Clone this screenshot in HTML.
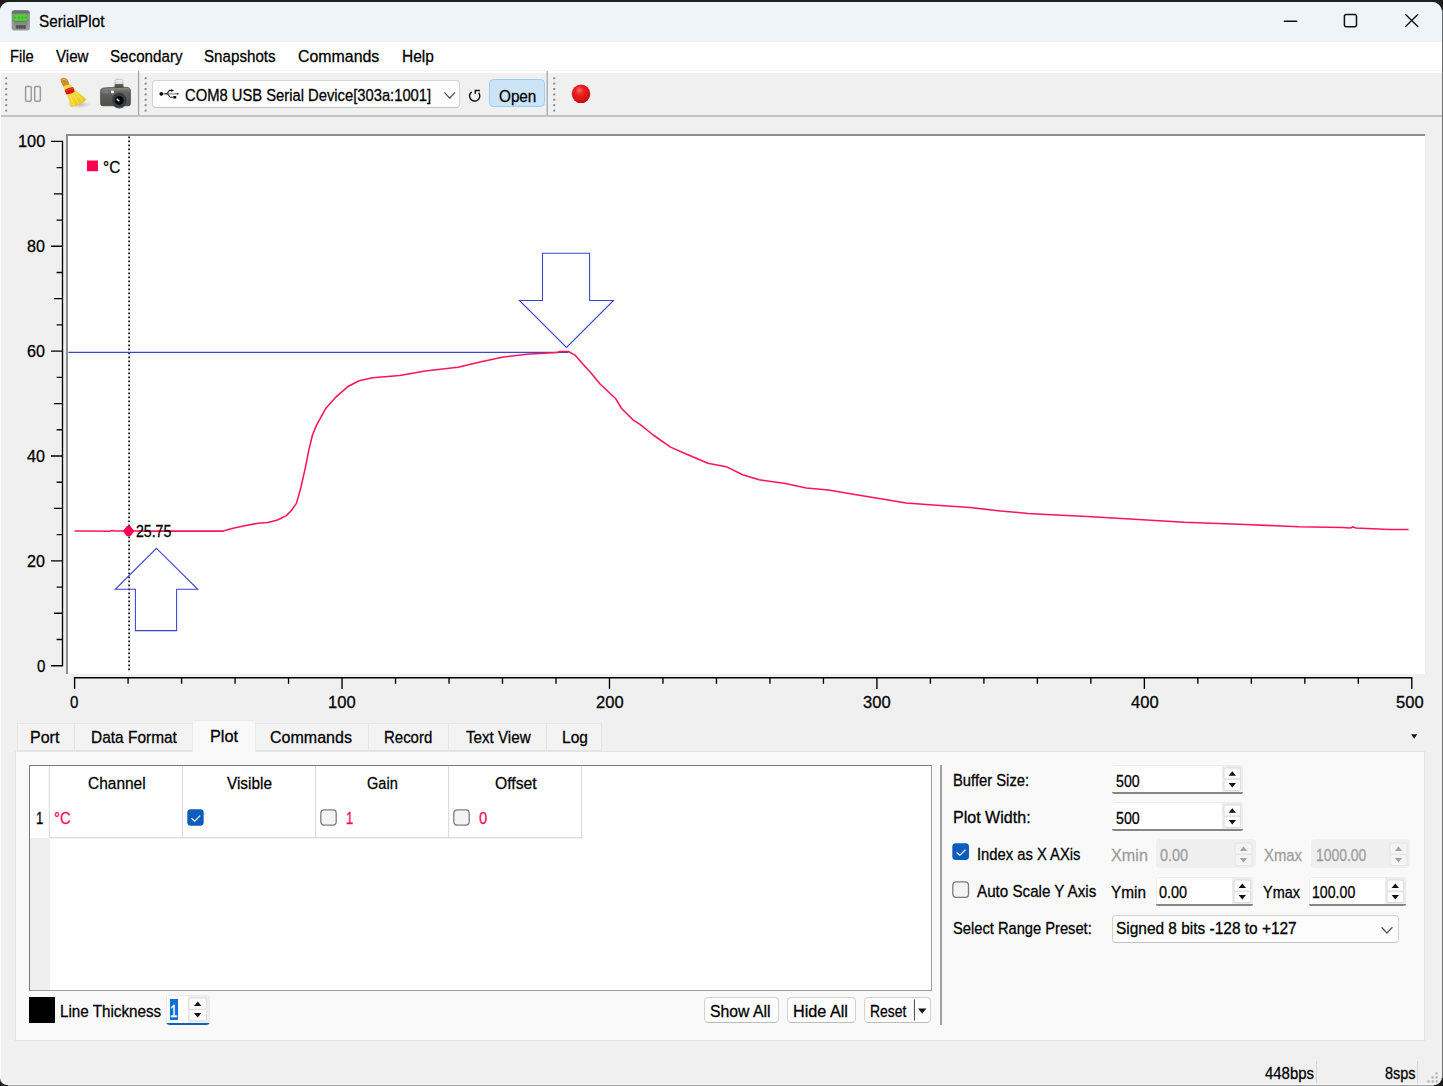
<!DOCTYPE html>
<html><head><meta charset="utf-8"><title>SerialPlot</title>
<style>
html,body{margin:0;padding:0;}
body{width:1443px;height:1086px;overflow:hidden;background:#1e1e1e;font-family:"Liberation Sans",sans-serif;}
#win{position:absolute;left:0;top:2px;width:1441.6px;height:1083.2px;background:#f0f0f0;border-radius:9px 10px 8px 7px;overflow:hidden;}
#in{position:absolute;left:0;top:-2px;width:1443px;height:1086px;}
.a{position:absolute;display:block;}
.t{position:absolute;white-space:nowrap;transform-origin:0 0;line-height:normal;-webkit-text-stroke:0.28px;font-family:"Liberation Sans",sans-serif;}
#edgeR{position:absolute;left:1441.6px;top:10px;width:1.4px;height:1068px;background:#6b6b6b;}
#edgeB{position:absolute;left:8px;top:1085.2px;width:1426px;height:0.8px;background:#9c9c9c;}
#edgeL{position:absolute;left:0;top:44px;width:1px;height:1034px;background:#fbfbfb;}
#edgeBW{position:absolute;left:6px;top:1084.2px;width:1430px;height:1px;background:#fbfbfb;}
</style></head>
<body>
<div id="win"><div id="in">
<!-- title bar -->
<div class="a" style="left:0.00px;top:0.00px;width:1443.00px;height:42.00px;background:#eff4f8;"></div>
<svg class="a" style="left:10px;top:8px" width="22" height="24" viewBox="10 8 22 24">
<defs><linearGradient id="gi" x1="0" y1="0" x2="0" y2="1"><stop offset="0" stop-color="#7a787c"/><stop offset="0.2" stop-color="#8f8e90"/><stop offset="1" stop-color="#9b9b9b"/></linearGradient></defs>
<rect x="11.6" y="10.3" width="18.3" height="20.2" rx="2.8" fill="url(#gi)"/>
<path d="M12.2 13.6 V12.6 Q12.2 10.6 14.4 10.6 H27.1 Q29.3 10.6 29.3 12.6 V13.6 Z" fill="#716d72"/>
<rect x="13.3" y="14.1" width="14.6" height="7.6" rx="2" fill="#3f8a33"/>
<rect x="13.3" y="14.1" width="14.6" height="7" rx="2" fill="#55c93e"/>
<g fill="#3faa2c"><circle cx="15.2" cy="17.6" r="0.9"/><circle cx="18.7" cy="17.6" r="0.9"/><circle cx="22.3" cy="17.6" r="0.9"/><circle cx="25.9" cy="17.6" r="0.9"/></g>
<rect x="14" y="22.2" width="13.4" height="2.4" fill="#858a83"/>
<rect x="15.7" y="25" width="10.2" height="3.7" fill="#606060"/>
<g fill="#4c4c4c"><rect x="16.6" y="25.6" width="1.2" height="2.6"/><rect x="19" y="25.6" width="1.2" height="2.6"/><rect x="21.4" y="25.6" width="1.2" height="2.6"/><rect x="23.8" y="25.6" width="1.2" height="2.6"/></g>
</svg>
<span class="t" id="t0" style="left:39.40px;top:12.00px;font-size:17px;color:#000;transform:scaleX(0.8988);">SerialPlot</span>
<svg class="a" style="left:1270px;top:6px" width="160" height="30" viewBox="1270 6 160 30" fill="none" stroke="#111" stroke-width="1.5" stroke-linecap="round">
<path d="M1284.4 21.3 H1296.8"/>
<rect x="1344.4" y="14.4" width="12.1" height="12.3" rx="2"/>
<path d="M1405.6 14.6 L1417.8 26.6 M1417.8 14.6 L1405.6 26.6" stroke-width="1.35"/>
</svg>
<!-- menu bar -->
<div class="a" style="left:0.00px;top:42.00px;width:1443.00px;height:31.00px;background:#fff;"></div>
<div class="a" style="left:0.00px;top:70.20px;width:1443.00px;height:1.00px;background:#f5f5f5;"></div>
<span class="t" id="t1" style="left:10.30px;top:47.00px;font-size:16.8px;color:#000;transform:scaleX(0.8757);">File</span>
<span class="t" id="t2" style="left:55.70px;top:47.00px;font-size:16.8px;color:#000;transform:scaleX(0.8989);">View</span>
<span class="t" id="t3" style="left:110.00px;top:47.00px;font-size:16.8px;color:#000;transform:scaleX(0.9039);">Secondary</span>
<span class="t" id="t4" style="left:204.30px;top:47.00px;font-size:16.8px;color:#000;transform:scaleX(0.9031);">Snapshots</span>
<span class="t" id="t5" style="left:298.40px;top:47.00px;font-size:16.8px;color:#000;transform:scaleX(0.9476);">Commands</span>
<span class="t" id="t6" style="left:401.80px;top:47.00px;font-size:16.8px;color:#000;transform:scaleX(0.9260);">Help</span>
<!-- toolbar -->
<div class="a" style="left:0.00px;top:115.00px;width:1443.00px;height:1.80px;background:#c2c2c2;"></div>
<svg class="a" style="left:0;top:70px" width="700" height="48" viewBox="0 70 700 48"><rect x="5.2" y="77.2" width="2" height="2" fill="#8d8d8d"/><rect x="4.0" y="76.2" width="1.2" height="1.2" fill="#fff"/><rect x="5.2" y="82.6" width="2" height="2" fill="#8d8d8d"/><rect x="4.0" y="81.6" width="1.2" height="1.2" fill="#fff"/><rect x="5.2" y="88.0" width="2" height="2" fill="#8d8d8d"/><rect x="4.0" y="87.0" width="1.2" height="1.2" fill="#fff"/><rect x="5.2" y="93.4" width="2" height="2" fill="#8d8d8d"/><rect x="4.0" y="92.4" width="1.2" height="1.2" fill="#fff"/><rect x="5.2" y="98.8" width="2" height="2" fill="#8d8d8d"/><rect x="4.0" y="97.8" width="1.2" height="1.2" fill="#fff"/><rect x="5.2" y="104.2" width="2" height="2" fill="#8d8d8d"/><rect x="4.0" y="103.2" width="1.2" height="1.2" fill="#fff"/><rect x="5.2" y="109.6" width="2" height="2" fill="#8d8d8d"/><rect x="4.0" y="108.6" width="1.2" height="1.2" fill="#fff"/><rect x="144.6" y="77.2" width="2" height="2" fill="#8d8d8d"/><rect x="143.4" y="76.2" width="1.2" height="1.2" fill="#fff"/><rect x="144.6" y="82.6" width="2" height="2" fill="#8d8d8d"/><rect x="143.4" y="81.6" width="1.2" height="1.2" fill="#fff"/><rect x="144.6" y="88.0" width="2" height="2" fill="#8d8d8d"/><rect x="143.4" y="87.0" width="1.2" height="1.2" fill="#fff"/><rect x="144.6" y="93.4" width="2" height="2" fill="#8d8d8d"/><rect x="143.4" y="92.4" width="1.2" height="1.2" fill="#fff"/><rect x="144.6" y="98.8" width="2" height="2" fill="#8d8d8d"/><rect x="143.4" y="97.8" width="1.2" height="1.2" fill="#fff"/><rect x="144.6" y="104.2" width="2" height="2" fill="#8d8d8d"/><rect x="143.4" y="103.2" width="1.2" height="1.2" fill="#fff"/><rect x="144.6" y="109.6" width="2" height="2" fill="#8d8d8d"/><rect x="143.4" y="108.6" width="1.2" height="1.2" fill="#fff"/><rect x="553.2" y="77.2" width="2" height="2" fill="#8d8d8d"/><rect x="552.0" y="76.2" width="1.2" height="1.2" fill="#fff"/><rect x="553.2" y="82.6" width="2" height="2" fill="#8d8d8d"/><rect x="552.0" y="81.6" width="1.2" height="1.2" fill="#fff"/><rect x="553.2" y="88.0" width="2" height="2" fill="#8d8d8d"/><rect x="552.0" y="87.0" width="1.2" height="1.2" fill="#fff"/><rect x="553.2" y="93.4" width="2" height="2" fill="#8d8d8d"/><rect x="552.0" y="92.4" width="1.2" height="1.2" fill="#fff"/><rect x="553.2" y="98.8" width="2" height="2" fill="#8d8d8d"/><rect x="552.0" y="97.8" width="1.2" height="1.2" fill="#fff"/><rect x="553.2" y="104.2" width="2" height="2" fill="#8d8d8d"/><rect x="552.0" y="103.2" width="1.2" height="1.2" fill="#fff"/><rect x="553.2" y="109.6" width="2" height="2" fill="#8d8d8d"/><rect x="552.0" y="108.6" width="1.2" height="1.2" fill="#fff"/><rect x="138" y="71" width="1.2" height="44" fill="#a2a2a2"/><rect x="546.6" y="71" width="1.2" height="44" fill="#a2a2a2"/><rect x="25.6" y="86.6" width="5.6" height="14.6" rx="1.2" fill="#f3f3f1" stroke="#9b9c98" stroke-width="1.5"/><rect x="34.7" y="86.6" width="5.6" height="14.6" rx="1.2" fill="#f3f3f1" stroke="#9b9c98" stroke-width="1.5"/></svg>
<svg class="a" style="left:56px;top:74px" width="36" height="38" viewBox="56 74 36 38">
<defs>
<linearGradient id="by" x1="0" y1="0" x2="1" y2="1"><stop offset="0" stop-color="#f7e24a"/><stop offset="0.5" stop-color="#f2d52c"/><stop offset="1" stop-color="#e0bd1f"/></linearGradient>
<radialGradient id="bs" cx="0.5" cy="0.5" r="0.5"><stop offset="0" stop-color="#000" stop-opacity="0.22"/><stop offset="1" stop-color="#000" stop-opacity="0"/></radialGradient>
</defs>
<ellipse cx="79" cy="104.5" rx="12" ry="3.6" fill="url(#bs)"/>
<path d="M60.6 80.2 C60.2 77.8 64 77 66.2 78.6 C68.4 80.2 69.6 83.6 69.4 86 L64.2 87.2 C62.4 85.2 61 82.6 60.6 80.2Z" fill="#c98f2c"/>
<path d="M62.2 80 C63 78.8 65.4 79.2 66.6 80.8" stroke="#e3b659" stroke-width="1" fill="none"/>
<path d="M63 87 C64.5 85 69.5 84.2 71.8 85.2 L73.2 88.6 L65.2 91.6 Z" fill="#f4dc3c"/>
<path d="M65.4 91.8 L73.6 88.4 L86.4 99.2 C83.5 103.2 76 106.8 70.6 107 C70 102 67.6 96 65.4 91.8Z" fill="url(#by)"/>
<path d="M64.6 90.2 C67 88.2 71.4 86.8 73.4 87.2 L74.6 91.6 C72 93.6 68.6 94.6 66.2 94.2 Z" fill="#d31622"/>
<path d="M65.4 91 C68 89.6 71.6 88.4 73.6 88.6" stroke="#f2545a" stroke-width="0.9" fill="none"/>
<path d="M70 95.5 L74 105.5 M73 94 L79 103.8 M75.5 92.5 L83 101" stroke="#f9ec8a" stroke-width="0.8" fill="none" opacity="0.8"/>
</svg>
<svg class="a" style="left:98px;top:76px" width="36" height="36" viewBox="98 76 36 36">
<defs>
<linearGradient id="cb" x1="0" y1="0" x2="0" y2="1"><stop offset="0" stop-color="#8d8f8a"/><stop offset="0.25" stop-color="#62645f"/><stop offset="1" stop-color="#4c4e4a"/></linearGradient>
<linearGradient id="cf" x1="0" y1="0" x2="0" y2="1"><stop offset="0" stop-color="#f6f6f6"/><stop offset="0.55" stop-color="#d8d8d8"/><stop offset="0.6" stop-color="#5a5c58"/><stop offset="1" stop-color="#4c4e4a"/></linearGradient>
<radialGradient id="cl" cx="0.5" cy="0.5" r="0.5"><stop offset="0" stop-color="#0c0d0e"/><stop offset="0.45" stop-color="#17191b"/><stop offset="0.7" stop-color="#3c4246"/><stop offset="1" stop-color="#2a2e31"/></radialGradient>
</defs>
<path d="M115.2 81.2 C115.2 79.6 116 79.3 117 79.3 L121 79.3 C122 79.3 122.8 79.6 122.8 81.2 L123.6 88 L114.4 88 Z" fill="url(#cf)" stroke="#8a8a8a" stroke-width="0.5"/>
<path d="M100.6 91 C100.6 89 102 88.2 104 88 L112 87.4 L127 87.4 C129.4 87.6 130.4 88.6 130.4 90.6 L130.4 103.4 C130.4 105 129.6 105.8 128 105.8 L103 105.8 C101.4 105.8 100.6 105 100.6 103.4 Z" fill="url(#cb)" stroke="#3c3d3a" stroke-width="0.7"/>
<rect x="102" y="90" width="7.4" height="3.6" rx="1.6" fill="#767873"/>
<rect x="111" y="90.6" width="3" height="2.6" fill="#f4f4f4"/>
<circle cx="119.3" cy="100.4" r="7.7" fill="url(#cl)" stroke="#555b5f" stroke-width="0.9"/>
<circle cx="119.3" cy="100.4" r="4.3" fill="#08090a"/>
<path d="M117.2 98.2 L119.8 100.8 L118.4 101.6 L116.4 99.4 Z" fill="#e8e8e8"/>
</svg>
<div class="a" style="left:152.40px;top:79.50px;width:307.60px;height:28.90px;background:#fdfdfd;border:1.4px solid #d4d4d4;border-bottom-color:#c4c4c4;border-radius:4px;box-sizing:border-box;"></div>
<svg class="a" style="left:156px;top:84px" width="28" height="20" viewBox="156 84 28 20">
<circle cx="161.3" cy="93.8" r="1.9" fill="#000"/>
<path d="M163 93.8 H177.4" stroke="#8c8c8c" stroke-width="1.3" fill="none"/>
<path d="M164.5 93.8 H167 L169.4 90.4 H172" stroke="#2a2a2a" stroke-width="1.1" fill="none"/>
<path d="M171.4 88.9 L174 90.4 L171.4 91.9Z" fill="#111"/>
<path d="M167.5 93.8 L170.2 97.3 H173.6" stroke="#2a2a2a" stroke-width="1.1" fill="none"/>
<rect x="173.4" y="96" width="2.8" height="2.6" fill="#111"/>
<path d="M176.8 92.4 L179.4 93.8 L176.8 95.2Z" fill="#555"/>
</svg>
<span class="t" id="t7" style="left:184.90px;top:86.00px;font-size:16.8px;color:#000;transform:scaleX(0.8796);">COM8 USB Serial Device[303a:1001]</span>
<svg class="a" style="left:440px;top:88px" width="20" height="14" viewBox="440 88 20 14"><path d="M444.4 92.4 L449.7 98.2 L455 92.4" fill="none" stroke="#555" stroke-width="1.25"/></svg>
<svg class="a" style="left:466px;top:86px" width="18" height="18" viewBox="466 86 18 18">
<path d="M471.7 91.8 A5.1 5.1 0 1 0 478.7 92.8" fill="none" stroke="#111" stroke-width="1.5"/>
<path d="M475.3 93.8 V90.5 H479.9" fill="none" stroke="#111" stroke-width="1.5"/>
</svg>
<div class="a" style="left:489.30px;top:79.00px;width:55.50px;height:28.30px;background:#cce4f7;border:1.3px solid #9ccdf3;border-radius:4.5px;box-sizing:border-box;"></div>
<span class="t" id="t8" style="left:499.30px;top:87.00px;font-size:16.8px;color:#000;transform:scaleX(0.9101);">Open</span>
<svg class="a" style="left:568px;top:80px" width="28" height="28" viewBox="568 80 28 28">
<defs><radialGradient id="rb" cx="0.42" cy="0.32" r="0.7"><stop offset="0" stop-color="#f26a64"/><stop offset="0.35" stop-color="#e8201e"/><stop offset="0.8" stop-color="#d81014"/><stop offset="1" stop-color="#b00a10"/></radialGradient></defs>
<circle cx="581" cy="93.8" r="9.3" fill="url(#rb)"/>
</svg>
<!-- plot -->
<div class="a" style="left:66.00px;top:133.80px;width:1359.00px;height:540.20px;background:#fff;border-left:2.6px solid #8e8e8e;border-top:2.5px solid #8e8e8e;box-sizing:border-box;"></div>
<svg class="a" style="left:0;top:118px" width="1443" height="600" viewBox="0 118 1443 600"><path d="M62.5 140.8 V666.3 M51.0 665.70 H63 M56.6 639.49 H63 M54.0 613.27 H63 M56.6 587.06 H63 M51.0 560.84 H63 M56.6 534.62 H63 M54.0 508.41 H63 M56.6 482.20 H63 M51.0 455.98 H63 M56.6 429.77 H63 M54.0 403.55 H63 M56.6 377.34 H63 M51.0 351.12 H63 M56.6 324.91 H63 M54.0 298.69 H63 M56.6 272.48 H63 M51.0 246.26 H63 M56.6 220.05 H63 M54.0 193.83 H63 M56.6 167.62 H63 M51.0 141.40 H63 M73.9 677.7 H1412.5 M74.60 677.2 V689.0 M128.09 677.2 V683.8 M181.58 677.2 V683.8 M235.06 677.2 V683.8 M288.55 677.2 V683.8 M342.04 677.2 V689.0 M395.53 677.2 V683.8 M449.02 677.2 V683.8 M502.50 677.2 V683.8 M555.99 677.2 V683.8 M609.48 677.2 V689.0 M662.97 677.2 V683.8 M716.46 677.2 V683.8 M769.94 677.2 V683.8 M823.43 677.2 V683.8 M876.92 677.2 V689.0 M930.41 677.2 V683.8 M983.90 677.2 V683.8 M1037.38 677.2 V683.8 M1090.87 677.2 V683.8 M1144.36 677.2 V689.0 M1197.85 677.2 V683.8 M1251.34 677.2 V683.8 M1304.82 677.2 V683.8 M1358.31 677.2 V683.8 M1411.80 677.2 V689.0" stroke="#000" stroke-width="1.35" fill="none"/><path d="M129.1 136.4 V671.5" stroke="#222" stroke-width="1.9" stroke-dasharray="1.9 2.1" fill="none"/><path d="M68.4 352.4 H568.3" stroke="#3a42d0" stroke-width="1.1" fill="none"/><path d="M542.5 253.3 H589.6 V300.4 H613.5 L566.5 347.4 L519.4 300.4 H542.5 Z" stroke="#3a42d0" stroke-width="1.05" fill="none" stroke-linejoin="miter"/><path d="M156.5 548.3 L197.8 589.3 H176.6 V630.6 H135.4 V589.3 H115.3 Z" stroke="#3a42d0" stroke-width="1.05" fill="none" stroke-linejoin="miter"/><polyline points="74.6,531.1 90.0,531.0 110.0,531.2 112.0,530.4 114.0,531.1 128.5,531.0 160.0,531.1 200.0,531.1 223.3,531.1 232.0,528.6 244.6,525.7 258.2,523.2 267.9,522.4 277.6,520.0 286.3,515.6 291.2,510.7 296.4,503.4 300.9,487.5 305.7,466.1 308.7,450.6 312.5,435.0 316.4,425.4 326.1,407.9 335.8,397.2 348.4,386.2 359.1,380.7 372.7,377.8 399.8,375.5 425.1,371.0 458.0,367.2 480.0,362.0 503.3,357.1 526.6,354.2 557.6,352.6 559.5,351.5 568.3,351.5 575.0,355.1 582.8,363.9 590.6,372.6 600.3,384.2 615.8,398.8 621.6,408.5 633.3,420.1 640.0,424.4 653.9,435.5 670.5,447.1 684.4,453.2 707.9,463.2 727.3,467.1 742.6,474.8 759.2,479.8 784.1,483.2 806.3,488.1 828.5,490.1 856.2,494.8 883.9,499.2 906.1,503.1 936.6,505.3 969.9,507.6 1000.3,510.9 1028.1,513.4 1046.4,514.5 1087.4,516.6 1134.3,519.2 1184.2,522.2 1245.7,524.5 1298.5,526.8 1342.5,527.4 1350.0,528.0 1353.0,526.9 1356.0,528.0 1389.4,529.5 1408.5,529.5" stroke="#ff1458" stroke-width="1.55" fill="none" stroke-linejoin="round"/><path d="M122.9 531 L126.9 526 H130.3 L134.3 531 L130.3 536.2 H126.9 Z" fill="#ff0050"/><rect x="87" y="160.5" width="11" height="10.7" fill="#ff0050"/></svg>
<span class="t" id="t9" style="left:103.30px;top:158.00px;font-size:17px;color:#000;transform:scaleX(0.9070);">°C</span>
<span class="t" id="t10" style="left:136.40px;top:523.00px;font-size:16px;color:#000;transform:scaleX(0.8818);">25.75</span>
<span class="t" id="t11" style="left:36.80px;top:657.00px;font-size:16.3px;color:#000;transform:scaleX(0.9269);">0</span>
<span class="t" id="t12" style="left:27.30px;top:552.00px;font-size:16.3px;color:#000;transform:scaleX(0.9876);">20</span>
<span class="t" id="t13" style="left:27.30px;top:447.00px;font-size:16.3px;color:#000;transform:scaleX(0.9876);">40</span>
<span class="t" id="t14" style="left:27.30px;top:342.00px;font-size:16.3px;color:#000;transform:scaleX(0.9876);">60</span>
<span class="t" id="t15" style="left:27.30px;top:237.00px;font-size:16.3px;color:#000;transform:scaleX(0.9876);">80</span>
<span class="t" id="t16" style="left:17.90px;top:132.00px;font-size:16.3px;color:#000;transform:scaleX(1.0041);">100</span>
<span class="t" id="t17" style="left:70.40px;top:693.00px;font-size:16.3px;color:#000;transform:scaleX(0.9269);">0</span>
<span class="t" id="t18" style="left:328.24px;top:693.00px;font-size:16.3px;color:#000;transform:scaleX(1.0151);">100</span>
<span class="t" id="t19" style="left:595.68px;top:693.00px;font-size:16.3px;color:#000;transform:scaleX(1.0151);">200</span>
<span class="t" id="t20" style="left:863.12px;top:693.00px;font-size:16.3px;color:#000;transform:scaleX(1.0151);">300</span>
<span class="t" id="t21" style="left:1130.56px;top:693.00px;font-size:16.3px;color:#000;transform:scaleX(1.0151);">400</span>
<span class="t" id="t22" style="left:1396.40px;top:693.00px;font-size:16.3px;color:#000;transform:scaleX(1.0151);">500</span>
<!-- tab widget -->
<div class="a" style="left:15.00px;top:751.00px;width:1409.60px;height:289.80px;background:#f9f9f9;border:1px solid #e4e4e4;box-sizing:border-box;"></div>
<div class="a" style="left:17.30px;top:722.70px;width:58.00px;height:28.70px;background:#f3f3f3;border:1px solid #e6e6e6;border-bottom-color:#e4e4e4;box-sizing:border-box;"></div>
<span class="t" id="t23" style="left:30.00px;top:728.00px;font-size:16.8px;color:#000;transform:scaleX(0.9542);">Port</span>
<div class="a" style="left:74.30px;top:722.70px;width:118.50px;height:28.70px;background:#f3f3f3;border:1px solid #e6e6e6;border-bottom-color:#e4e4e4;box-sizing:border-box;"></div>
<span class="t" id="t24" style="left:91.40px;top:728.00px;font-size:16.8px;color:#000;transform:scaleX(0.9212);">Data Format</span>
<div class="a" style="left:255.00px;top:722.70px;width:113.60px;height:28.70px;background:#f3f3f3;border:1px solid #e6e6e6;border-bottom-color:#e4e4e4;box-sizing:border-box;"></div>
<span class="t" id="t25" style="left:269.50px;top:728.00px;font-size:16.8px;color:#000;transform:scaleX(0.9546);">Commands</span>
<div class="a" style="left:367.60px;top:722.70px;width:81.40px;height:28.70px;background:#f3f3f3;border:1px solid #e6e6e6;border-bottom-color:#e4e4e4;box-sizing:border-box;"></div>
<span class="t" id="t26" style="left:384.30px;top:728.00px;font-size:16.8px;color:#000;transform:scaleX(0.8917);">Record</span>
<div class="a" style="left:448.00px;top:722.70px;width:98.50px;height:28.70px;background:#f3f3f3;border:1px solid #e6e6e6;border-bottom-color:#e4e4e4;box-sizing:border-box;"></div>
<span class="t" id="t27" style="left:465.90px;top:728.00px;font-size:16.8px;color:#000;transform:scaleX(0.9032);">Text View</span>
<div class="a" style="left:545.50px;top:722.70px;width:56.50px;height:28.70px;background:#f3f3f3;border:1px solid #e6e6e6;border-bottom-color:#e4e4e4;box-sizing:border-box;"></div>
<span class="t" id="t28" style="left:562.40px;top:728.00px;font-size:16.8px;color:#000;transform:scaleX(0.9243);">Log</span>
<div class="a" style="left:191.80px;top:720.20px;width:63.80px;height:32.20px;background:#f9f9f9;border:1px solid #ebebeb;border-bottom:none;box-sizing:border-box;border-radius:2px 2px 0 0;"></div>
<span class="t" id="t29" style="left:209.60px;top:727.00px;font-size:16.8px;color:#000;transform:scaleX(0.9708);">Plot</span>
<svg class="a" style="left:1408px;top:732px" width="12" height="10" viewBox="1408 732 12 10"><path d="M1411.2 734.2 H1417.2 L1414.2 738.8Z" fill="#111"/></svg>
<div class="a" style="left:28.80px;top:765.00px;width:903.60px;height:226.00px;background:#fff;border:1.3px solid #9b9da2;border-left:1.8px solid #747984;border-top:1.6px solid #747984;box-sizing:border-box;"></div>
<div class="a" style="left:30.20px;top:837.80px;width:19.40px;height:151.80px;background:#efefef;"></div>
<svg class="a" style="left:0;top:760px" width="600" height="90" viewBox="0 760 600 90"><rect x="48.8" y="766.3" width="1.1" height="71.8" fill="#dadada"/><rect x="181.9" y="766.3" width="1.1" height="71.8" fill="#dadada"/><rect x="315.0" y="766.3" width="1.1" height="71.8" fill="#dadada"/><rect x="448.1" y="766.3" width="1.1" height="71.8" fill="#dadada"/><rect x="581.1" y="766.3" width="1.1" height="71.8" fill="#dadada"/><rect x="49.4" y="837.2" width="532.8" height="1.1" fill="#d6d6d6"/></svg>
<span class="t" id="t30" style="left:87.60px;top:774.00px;font-size:16.8px;color:#000;transform:scaleX(0.9220);">Channel</span>
<span class="t" id="t31" style="left:227.30px;top:774.00px;font-size:16.8px;color:#000;transform:scaleX(0.9148);">Visible</span>
<span class="t" id="t32" style="left:367.20px;top:774.00px;font-size:16.8px;color:#000;transform:scaleX(0.8681);">Gain</span>
<span class="t" id="t33" style="left:495.20px;top:774.00px;font-size:16.8px;color:#000;transform:scaleX(0.9370);">Offset</span>
<span class="t" id="t34" style="left:35.61px;top:809.00px;font-size:16.8px;color:#000;transform:scaleX(0.7800);">1</span>
<span class="t" id="t35" style="left:54.30px;top:809.00px;font-size:16.8px;color:#ff0a5a;transform:scaleX(0.8860);">°C</span>
<span class="t" id="t36" style="left:345.86px;top:809.00px;font-size:16.8px;color:#ff0a5a;transform:scaleX(0.7800);">1</span>
<span class="t" id="t37" style="left:478.50px;top:809.00px;font-size:16.8px;color:#ff0a5a;transform:scaleX(0.8779);">0</span>
<svg class="a" style="left:187.0px;top:809.0px" width="17" height="17" viewBox="0 0 17 17"><rect x="0.3" y="0.3" width="16.4" height="16.4" rx="3.4" fill="#0e5dbd"/><path d="M4.5 9.3 L7.7 12.1 L13.2 6.6" fill="none" stroke="#fff" stroke-width="1.15"/></svg>
<svg class="a" style="left:320.4px;top:809.0px" width="17" height="17" viewBox="0 0 17 17"><rect x="0.8" y="0.8" width="15.4" height="15.4" rx="3.4" fill="#f4f4f4" stroke="#7d7d7d" stroke-width="1.3"/></svg>
<svg class="a" style="left:453.4px;top:809.0px" width="17" height="17" viewBox="0 0 17 17"><rect x="0.8" y="0.8" width="15.4" height="15.4" rx="3.4" fill="#f4f4f4" stroke="#7d7d7d" stroke-width="1.3"/></svg>
<div class="a" style="left:28.80px;top:996.60px;width:26.20px;height:26.20px;background:#000;"></div>
<span class="t" id="t38" style="left:60.20px;top:1002.00px;font-size:16.8px;color:#000;transform:scaleX(0.9065);">Line Thickness</span>
<div class="a" style="left:166.30px;top:995.40px;width:43.40px;height:29.50px;background:#ededed;border-radius:3px 3px 4px 4px;overflow:hidden;"><div class="a" style="left:0.90px;top:0.90px;width:21.30px;height:26.60px;background:#fff;"></div><div class="a" style="left:0.00px;top:27.40px;width:43.40px;height:2.10px;background:#1160c0;"></div></div><svg class="a" style="left:188.1px;top:997.3px" width="19.4" height="24.8" viewBox="188.1 997.3 19.4 24.8"><rect x="189.1" y="998.3" width="17.4" height="11.4" rx="2" fill="#fdfdfd" stroke="#dcdcdc" stroke-width="1"/><rect x="189.1" y="1009.7" width="17.4" height="11.4" rx="2" fill="#fdfdfd" stroke="#dcdcdc" stroke-width="1"/><path d="M194.1 1006.2 L197.8 1001.7 L201.5 1006.2 Z" fill="#111"/><path d="M194.1 1013.4 L197.8 1017.9 L201.5 1013.4 Z" fill="#111"/></svg>
<div class="a" style="left:169.80px;top:999.10px;width:7.90px;height:21.20px;background:#0f6fd6;"></div>
<span class="t" id="t39" style="left:170.16px;top:1002.00px;font-size:16.8px;color:#fff;transform:scaleX(0.7800);">1</span>
<div class="a" style="left:704.00px;top:997.30px;width:74.80px;height:25.60px;background:#fdfdfd;border:1px solid #d2d2d2;border-bottom-color:#bcbcbc;border-radius:4.5px;box-sizing:border-box;"></div>
<span class="t" id="t40" style="left:710.40px;top:1002.00px;font-size:16.8px;color:#000;transform:scaleX(0.9390);">Show All</span>
<div class="a" style="left:786.50px;top:997.30px;width:69.90px;height:25.60px;background:#fdfdfd;border:1px solid #d2d2d2;border-bottom-color:#bcbcbc;border-radius:4.5px;box-sizing:border-box;"></div>
<span class="t" id="t41" style="left:793.00px;top:1002.00px;font-size:16.8px;color:#000;transform:scaleX(0.9654);">Hide All</span>
<div class="a" style="left:863.60px;top:997.30px;width:67.20px;height:25.60px;background:#fdfdfd;border:1px solid #d2d2d2;border-bottom-color:#bcbcbc;border-radius:4.5px;box-sizing:border-box;"></div>
<span class="t" id="t42" style="left:870.30px;top:1002.00px;font-size:16.8px;color:#000;transform:scaleX(0.8295);">Reset</span>
<svg class="a" style="left:910px;top:998px" width="20" height="24" viewBox="910 998 20 24"><rect x="913.9" y="999.5" width="1.1" height="21" fill="#555"/><path d="M918 1008.6 H926.4 L922.2 1013.6Z" fill="#111"/></svg>
<div class="a" style="left:940.40px;top:765.00px;width:1.70px;height:260.40px;background:#a2a2a2;"></div>
<span class="t" id="t43" style="left:952.80px;top:771.00px;font-size:16.8px;color:#000;transform:scaleX(0.8806);">Buffer Size:</span>
<span class="t" id="t44" style="left:952.80px;top:808.00px;font-size:16.8px;color:#000;transform:scaleX(0.9566);">Plot Width:</span>
<svg class="a" style="left:952.3px;top:843.2px" width="17.3" height="17.3" viewBox="0 0 17 17"><rect x="0.3" y="0.3" width="16.4" height="16.4" rx="3.4" fill="#0e5dbd"/><path d="M4.5 9.3 L7.7 12.1 L13.2 6.6" fill="none" stroke="#fff" stroke-width="1.15"/></svg>
<span class="t" id="t45" style="left:976.50px;top:845.00px;font-size:16.8px;color:#000;transform:scaleX(0.8796);">Index as X AXis</span>
<svg class="a" style="left:952.3px;top:880.5px" width="17.3" height="17.3" viewBox="0 0 17 17"><rect x="0.8" y="0.8" width="15.4" height="15.4" rx="3.4" fill="#f4f4f4" stroke="#7d7d7d" stroke-width="1.3"/></svg>
<span class="t" id="t46" style="left:976.60px;top:882.00px;font-size:16.8px;color:#000;transform:scaleX(0.9046);">Auto Scale Y Axis</span>
<span class="t" id="t47" style="left:952.80px;top:919.00px;font-size:16.8px;color:#000;transform:scaleX(0.8749);">Select Range Preset:</span>
<div class="a" style="left:1111.60px;top:765.40px;width:131.40px;height:28.60px;background:#ededed;border-radius:3px 3px 2px 2px;overflow:hidden;"><div class="a" style="left:0.90px;top:0.90px;width:109.30px;height:26.50px;background:#fff;"></div><div class="a" style="left:0.00px;top:27.10px;width:131.40px;height:1.50px;background:#868686;"></div></div><svg class="a" style="left:1222.6px;top:767.3px" width="18.7" height="24.5" viewBox="1222.6 767.3 18.7 24.5"><rect x="1223.6" y="768.3" width="16.7" height="11.2" rx="2" fill="#fdfdfd" stroke="#dcdcdc" stroke-width="1"/><rect x="1223.6" y="779.5" width="16.7" height="11.2" rx="2" fill="#fdfdfd" stroke="#dcdcdc" stroke-width="1"/><path d="M1228.2 776.1 L1231.9 771.6 L1235.6 776.1 Z" fill="#111"/><path d="M1228.2 783.2 L1231.9 787.7 L1235.6 783.2 Z" fill="#111"/></svg><span class="t" id="t48" style="left:1115.60px;top:772.00px;font-size:16.8px;color:#000;transform:scaleX(0.8458);">500</span>
<div class="a" style="left:1111.60px;top:802.40px;width:131.40px;height:28.60px;background:#ededed;border-radius:3px 3px 2px 2px;overflow:hidden;"><div class="a" style="left:0.90px;top:0.90px;width:109.30px;height:26.50px;background:#fff;"></div><div class="a" style="left:0.00px;top:27.10px;width:131.40px;height:1.50px;background:#868686;"></div></div><svg class="a" style="left:1222.6px;top:804.3px" width="18.7" height="24.5" viewBox="1222.6 804.3 18.7 24.5"><rect x="1223.6" y="805.3" width="16.7" height="11.2" rx="2" fill="#fdfdfd" stroke="#dcdcdc" stroke-width="1"/><rect x="1223.6" y="816.5" width="16.7" height="11.2" rx="2" fill="#fdfdfd" stroke="#dcdcdc" stroke-width="1"/><path d="M1228.2 813.1 L1231.9 808.6 L1235.6 813.1 Z" fill="#111"/><path d="M1228.2 820.2 L1231.9 824.7 L1235.6 820.2 Z" fill="#111"/></svg><span class="t" id="t49" style="left:1115.60px;top:809.00px;font-size:16.8px;color:#000;transform:scaleX(0.8458);">500</span>
<span class="t" id="t50" style="left:1110.60px;top:846.00px;font-size:16.8px;color:#9d9d9d;transform:scaleX(0.9668);">Xmin</span>
<div class="a" style="left:1156.00px;top:839.30px;width:99.80px;height:28.70px;background:#efefef;border-radius:4px;"></div><svg class="a" style="left:1234.4px;top:841.5px" width="19.0" height="24.7" viewBox="1234.4 841.5 19.0 24.7"><rect x="1235.4" y="842.5" width="17.0" height="11.4" rx="2" fill="#f4f4f4" stroke="#e4e4e4" stroke-width="1"/><rect x="1235.4" y="853.9" width="17.0" height="11.4" rx="2" fill="#f4f4f4" stroke="#e4e4e4" stroke-width="1"/><path d="M1240.2 850.4 L1243.9 845.9 L1247.6 850.4 Z" fill="#a3a3a3"/><path d="M1240.2 857.5 L1243.9 862.0 L1247.6 857.5 Z" fill="#a3a3a3"/></svg><span class="t" id="t51" style="left:1160.00px;top:846.00px;font-size:16.8px;color:#9d9d9d;transform:scaleX(0.8595);">0.00</span>
<span class="t" id="t52" style="left:1264.00px;top:846.00px;font-size:16.8px;color:#9d9d9d;transform:scaleX(0.8849);">Xmax</span>
<div class="a" style="left:1310.80px;top:839.30px;width:99.20px;height:28.70px;background:#efefef;border-radius:4px;"></div><svg class="a" style="left:1388.6px;top:841.5px" width="19.0" height="24.7" viewBox="1388.6 841.5 19.0 24.7"><rect x="1389.6" y="842.5" width="17.0" height="11.4" rx="2" fill="#f4f4f4" stroke="#e4e4e4" stroke-width="1"/><rect x="1389.6" y="853.9" width="17.0" height="11.4" rx="2" fill="#f4f4f4" stroke="#e4e4e4" stroke-width="1"/><path d="M1394.4 850.4 L1398.1 845.9 L1401.8 850.4 Z" fill="#a3a3a3"/><path d="M1394.4 857.5 L1398.1 862.0 L1401.8 857.5 Z" fill="#a3a3a3"/></svg><span class="t" id="t53" style="left:1315.70px;top:846.00px;font-size:16.8px;color:#9d9d9d;transform:scaleX(0.8299);">1000.00</span>
<span class="t" id="t54" style="left:1111.00px;top:883.00px;font-size:16.8px;color:#000;transform:scaleX(0.9145);">Ymin</span>
<div class="a" style="left:1155.80px;top:877.20px;width:97.70px;height:28.70px;background:#ededed;border-radius:3px 3px 2px 2px;overflow:hidden;"><div class="a" style="left:0.90px;top:0.90px;width:75.60px;height:26.60px;background:#fff;"></div><div class="a" style="left:0.00px;top:27.20px;width:97.70px;height:1.50px;background:#868686;"></div></div><svg class="a" style="left:1233.1px;top:879.1px" width="18.7" height="24.6" viewBox="1233.1 879.1 18.7 24.6"><rect x="1234.1" y="880.1" width="16.7" height="11.3" rx="2" fill="#fdfdfd" stroke="#dcdcdc" stroke-width="1"/><rect x="1234.1" y="891.4" width="16.7" height="11.3" rx="2" fill="#fdfdfd" stroke="#dcdcdc" stroke-width="1"/><path d="M1238.7 888.0 L1242.4 883.5 L1246.1 888.0 Z" fill="#111"/><path d="M1238.7 895.0 L1242.4 899.5 L1246.1 895.0 Z" fill="#111"/></svg><span class="t" id="t55" style="left:1158.80px;top:883.00px;font-size:16.8px;color:#000;transform:scaleX(0.8626);">0.00</span>
<span class="t" id="t56" style="left:1263.00px;top:883.00px;font-size:16.8px;color:#000;transform:scaleX(0.8617);">Ymax</span>
<div class="a" style="left:1309.00px;top:877.20px;width:97.40px;height:28.70px;background:#ededed;border-radius:3px 3px 2px 2px;overflow:hidden;"><div class="a" style="left:0.90px;top:0.90px;width:75.30px;height:26.60px;background:#fff;"></div><div class="a" style="left:0.00px;top:27.20px;width:97.40px;height:1.50px;background:#868686;"></div></div><svg class="a" style="left:1386.0px;top:879.1px" width="18.7" height="24.6" viewBox="1386.0 879.1 18.7 24.6"><rect x="1387.0" y="880.1" width="16.7" height="11.3" rx="2" fill="#fdfdfd" stroke="#dcdcdc" stroke-width="1"/><rect x="1387.0" y="891.4" width="16.7" height="11.3" rx="2" fill="#fdfdfd" stroke="#dcdcdc" stroke-width="1"/><path d="M1391.6 888.0 L1395.3 883.5 L1399.0 888.0 Z" fill="#111"/><path d="M1391.6 895.0 L1395.3 899.5 L1399.0 895.0 Z" fill="#111"/></svg><span class="t" id="t57" style="left:1312.40px;top:883.00px;font-size:16.8px;color:#000;transform:scaleX(0.8426);">100.00</span>
<div class="a" style="left:1111.50px;top:914.50px;width:287.30px;height:28.10px;background:#fdfdfd;border:1.2px solid #d2d2d2;border-bottom-color:#c0c0c0;border-radius:4px;box-sizing:border-box;"></div>
<span class="t" id="t58" style="left:1116.00px;top:919.00px;font-size:16.8px;color:#000;transform:scaleX(0.9201);">Signed 8 bits -128 to +127</span>
<svg class="a" style="left:1378px;top:924px" width="20" height="14" viewBox="1378 924 20 14"><path d="M1381.6 927.2 L1387 933 L1392.4 927.2" fill="none" stroke="#555" stroke-width="1.25"/></svg>
<!-- status bar -->
<span class="t" id="t59" style="left:1265.00px;top:1064.00px;font-size:16.8px;color:#000;transform:scaleX(0.8890);">448bps</span>
<span class="t" id="t60" style="left:1385.00px;top:1064.00px;font-size:16.8px;color:#000;transform:scaleX(0.8624);">8sps</span>
<div class="a" style="left:1316.20px;top:1061.00px;width:1.10px;height:21.50px;background:#d6d6d6;"></div>
<div class="a" style="left:1417.20px;top:1061.00px;width:1.10px;height:21.50px;background:#d6d6d6;"></div>
<svg class="a" style="left:1424px;top:1068px" width="18" height="18" viewBox="1424 1068 18 18"><rect x="1435.6" y="1072.4" width="2" height="2" fill="#a9a9a9"/><rect x="1431.6" y="1076.4" width="2" height="2" fill="#a9a9a9"/><rect x="1435.6" y="1076.4" width="2" height="2" fill="#a9a9a9"/><rect x="1427.6" y="1080.4" width="2" height="2" fill="#a9a9a9"/><rect x="1431.6" y="1080.4" width="2" height="2" fill="#a9a9a9"/><rect x="1435.6" y="1080.4" width="2" height="2" fill="#a9a9a9"/></svg>
<div id="edgeL"></div><div id="edgeBW"></div>
</div></div>
<div id="edgeR"></div><div id="edgeB"></div>
</body></html>
